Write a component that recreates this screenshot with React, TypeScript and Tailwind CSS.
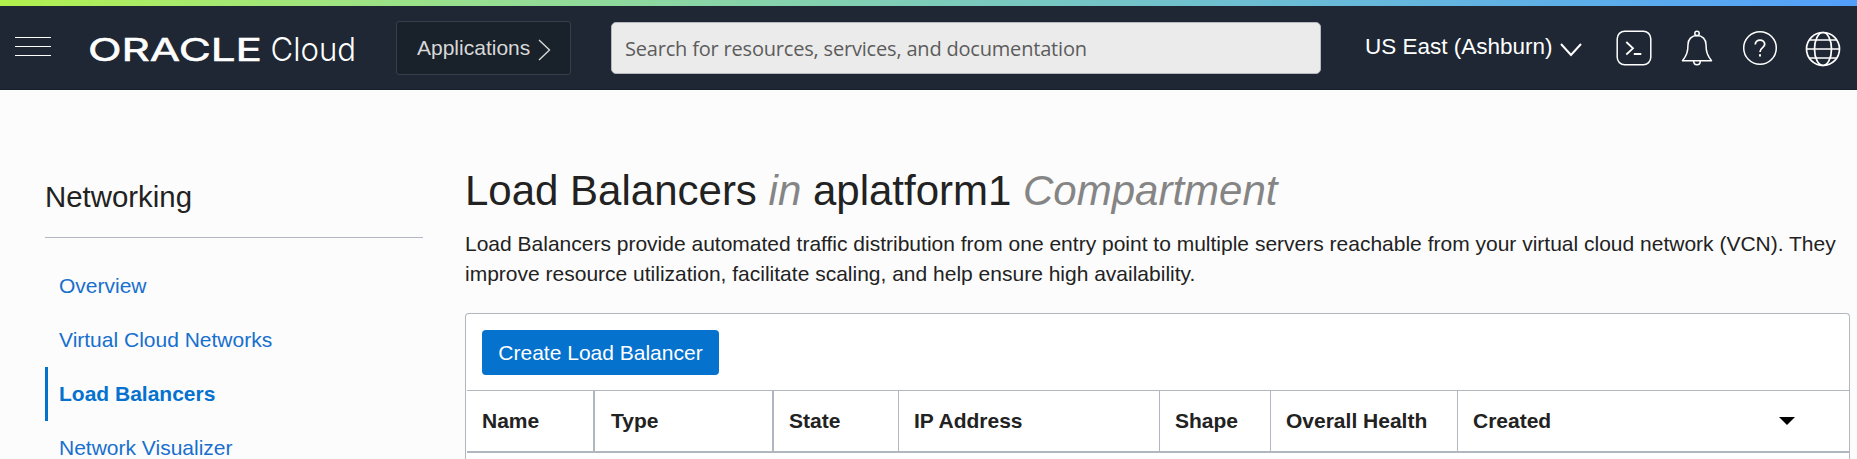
import React from "react";

const navItems = ["Overview", "Virtual Cloud Networks", "Load Balancers", "Network Visualizer"];

const columns = [
  { label: "Name", cls: "w-[128px] border-r-2 pl-[15px]" },
  { label: "Type", cls: "w-[179px] border-r-2 pl-[16px]" },
  { label: "State", cls: "w-[125px] border-r pl-[15px]" },
  { label: "IP Address", cls: "w-[261px] border-r pl-[15px]" },
  { label: "Shape", cls: "w-[111px] border-r pl-[15px]" },
  { label: "Overall Health", cls: "w-[187px] border-r pl-[15px]" },
];

function Logo() {
  return (
    <svg className="ml-[38px] mt-[13px] block shrink-0" width="288" height="64" viewBox="0 -10 288 64" fill="#fff">
      <text x="-1" y="32" fontFamily="Inter" fontWeight="400" fontSize="31.6" textLength="174" lengthAdjust="spacingAndGlyphs" stroke="#fff" strokeWidth="0.6">
        ORACLE
      </text>
      <text x="181.500" y="32" fontFamily="Inter" fontWeight="300" fontSize="32.500" textLength="85.500" lengthAdjust="spacingAndGlyphs">
        Cloud
      </text>
    </svg>
  );
}

function TerminalIcon() {
  return (
    <svg width="36" height="36" viewBox="0 0 36 36" fill="none" stroke="#fff" strokeWidth="1.5">
      <rect x="1.2" y="1.2" width="33.600" height="33.600" rx="7.500" />
      <path d="M10.300 12L17 18.300L10.300 24.500M17.800 24H25.300" strokeWidth="1.8" />
    </svg>
  );
}

function BellIcon() {
  return (
    <svg width="32" height="36" viewBox="0 0 32 36" fill="none" stroke="#fff" strokeWidth="1.5" strokeLinejoin="round">
      <circle cx="16" cy="3.500" r="2.200" />
      <path d="M16 5.500C10.500 5.500 7 9.500 7 14.500C7 22 5.500 25.500 1.500 30.800H30.500C26.500 25.500 25 22 25 14.500C25 9.500 21.500 5.500 16 5.500Z" />
      <path d="M12.700 31C12.700 36 19.300 36 19.300 31" />
    </svg>
  );
}

function HelpIcon() {
  return (
    <svg width="36" height="36" viewBox="0 0 36 36" fill="none" stroke="#fff" strokeWidth="1.5">
      <circle cx="18" cy="18" r="16.300" />
      <path d="M13.300 14.500C13.300 8.600 22.700 8.600 22.700 14.300C22.700 17.800 18 17.500 18 22" strokeWidth="1.8" />
      <path d="M18 24.200V26.400" strokeWidth="2" />
    </svg>
  );
}

function GlobeIcon() {
  return (
    <svg width="36" height="36" viewBox="0 0 36 36" fill="none" stroke="#fff" strokeWidth="1.7">
      <circle cx="18" cy="18" r="16.500" />
      <ellipse cx="18" cy="18" rx="8.500" ry="16.500" />
      <path d="M1.500 18H34.500M4.500 9H31.500M4.500 27H31.500" />
    </svg>
  );
}

function Header() {
  return (
    <header className="flex h-[84px] shrink-0 items-start border-b border-[#17202b] bg-[#1e2733] text-white">
      <svg className="ml-[15px] mt-[30px] block shrink-0" width="36" height="21" viewBox="0 0 36 21">
        <path d="M0 1.500H36M0 10.500H36M0 19.500H36" stroke="#fff" strokeWidth="1" />
      </svg>
      <Logo />
      <button className="ml-[19px] mt-[15px] flex h-[54px] w-[175px] shrink-0 items-center rounded-[3px] border border-[#363f4b] bg-[#19212a] pl-5 text-[21px] leading-[54px] text-[#d8d8d8]">
        <span className="whitespace-nowrap">Applications</span>
        <svg className="ml-2 mt-[4px]" width="13" height="22" viewBox="0 0 13 22" fill="none" stroke="#d8d8d8" strokeWidth="1.4">
          <path d="M1 1L11.500 11L1 21" />
        </svg>
      </button>
      <div className="ml-10 mt-4 flex h-[52px] w-[710px] shrink-0 items-center rounded-[5px] border border-[#b4b9c0] bg-[#ebebeb] pl-[13px]">
        <span className="mt-[2px] font-['Open_Sans',sans-serif] text-[20px] leading-[28px] tracking-[-0.19px] text-[#5c5c5c]">
          Search for resources, services, and documentation
        </span>
      </div>
      <div className="ml-[44px] mt-[25px] flex w-[217px] shrink-0 items-start">
        <span className="whitespace-nowrap text-[22.5px] leading-[32px]">US East (Ashburn)</span>
        <svg className="ml-auto mt-[12px] block shrink-0" width="22" height="14" viewBox="0 0 22 14" fill="none" stroke="#fff" strokeWidth="2">
          <path d="M1 1L11 12L21 1" />
        </svg>
      </div>
      <div className="ml-[34px] mt-6 flex shrink-0">
        <TerminalIcon />
        <div className="ml-[29px]"><BellIcon /></div>
        <div className="ml-[29px]"><HelpIcon /></div>
        <div className="ml-[27px] mt-px"><GlobeIcon /></div>
      </div>
    </header>
  );
}

export default function App() {
  return (
    <div className="flex h-[459px] w-[1857px] flex-col overflow-hidden bg-[#fcfcfc] font-['Liberation_Sans',sans-serif] text-[#222]">
      <div className="h-[6px] shrink-0 bg-linear-to-r from-[#b2f04b] to-[#529ffa]" />
      <Header />
      <div className="flex min-h-0 flex-1">
        <nav className="ml-[45px] w-[378px] shrink-0 pt-[88px]">
          <h2 className="h-[60px] border-b border-[#b3b7c4] text-[29.4px] leading-[37px]">Networking</h2>
          <ul className="mt-[21px]">
            {navItems.map((item) => (
              <li
                key={item}
                className={
                  item === "Load Balancers"
                    ? "flex h-[54px] items-center border-l-[3px] border-[#0572ce] pl-[11px] text-[21px] font-bold text-[#0572ce]"
                    : "flex h-[54px] items-center border-l-[3px] border-transparent pl-[11px] text-[21px] text-[#176fce]"
                }
              >
                {item}
              </li>
            ))}
          </ul>
        </nav>
        <main className="ml-[42px] flex w-[1385px] shrink-0 flex-col pt-[79px]">
          <h1 className="whitespace-nowrap text-[42px] leading-[44px]">
            Load Balancers <i className="text-[#858585]">in</i> aplatform1 <i className="text-[#858585]">Compartment</i>
          </h1>
          <p className="mt-4 text-[21px] leading-[30px]">
            Load Balancers provide automated traffic distribution from one entry point to multiple servers reachable from your virtual cloud network (VCN). They improve resource utilization, facilitate scaling, and help ensure high availability.
          </p>
          <section className="mt-6 flex-1 rounded-t-[4px] border border-b-0 border-[#b1b7bf] bg-white">
            <div className="flex h-[76px] pl-4 pt-4">
              <button className="h-[45px] w-[237px] rounded-[4px] bg-[#0572ce] text-[21px] leading-[45px] text-white">
                Create Load Balancer
              </button>
            </div>
            <div className="ml-px flex h-[63px] border-t border-b-2 border-[#b1b7bf] text-[21px] font-bold">
              {columns.map((c) => (
                <div key={c.label} className={`flex shrink-0 items-center whitespace-nowrap border-[#b1b7bf] ${c.cls}`}>
                  {c.label}
                </div>
              ))}
              <div className="flex flex-1 items-center justify-between pl-[15px] pr-[54px]">
                Created
                <svg width="16" height="8" viewBox="0 0 16 8">
                  <path d="M0 0H16L8 8Z" fill="#000" />
                </svg>
              </div>
            </div>
          </section>
        </main>
      </div>
    </div>
  );
}
